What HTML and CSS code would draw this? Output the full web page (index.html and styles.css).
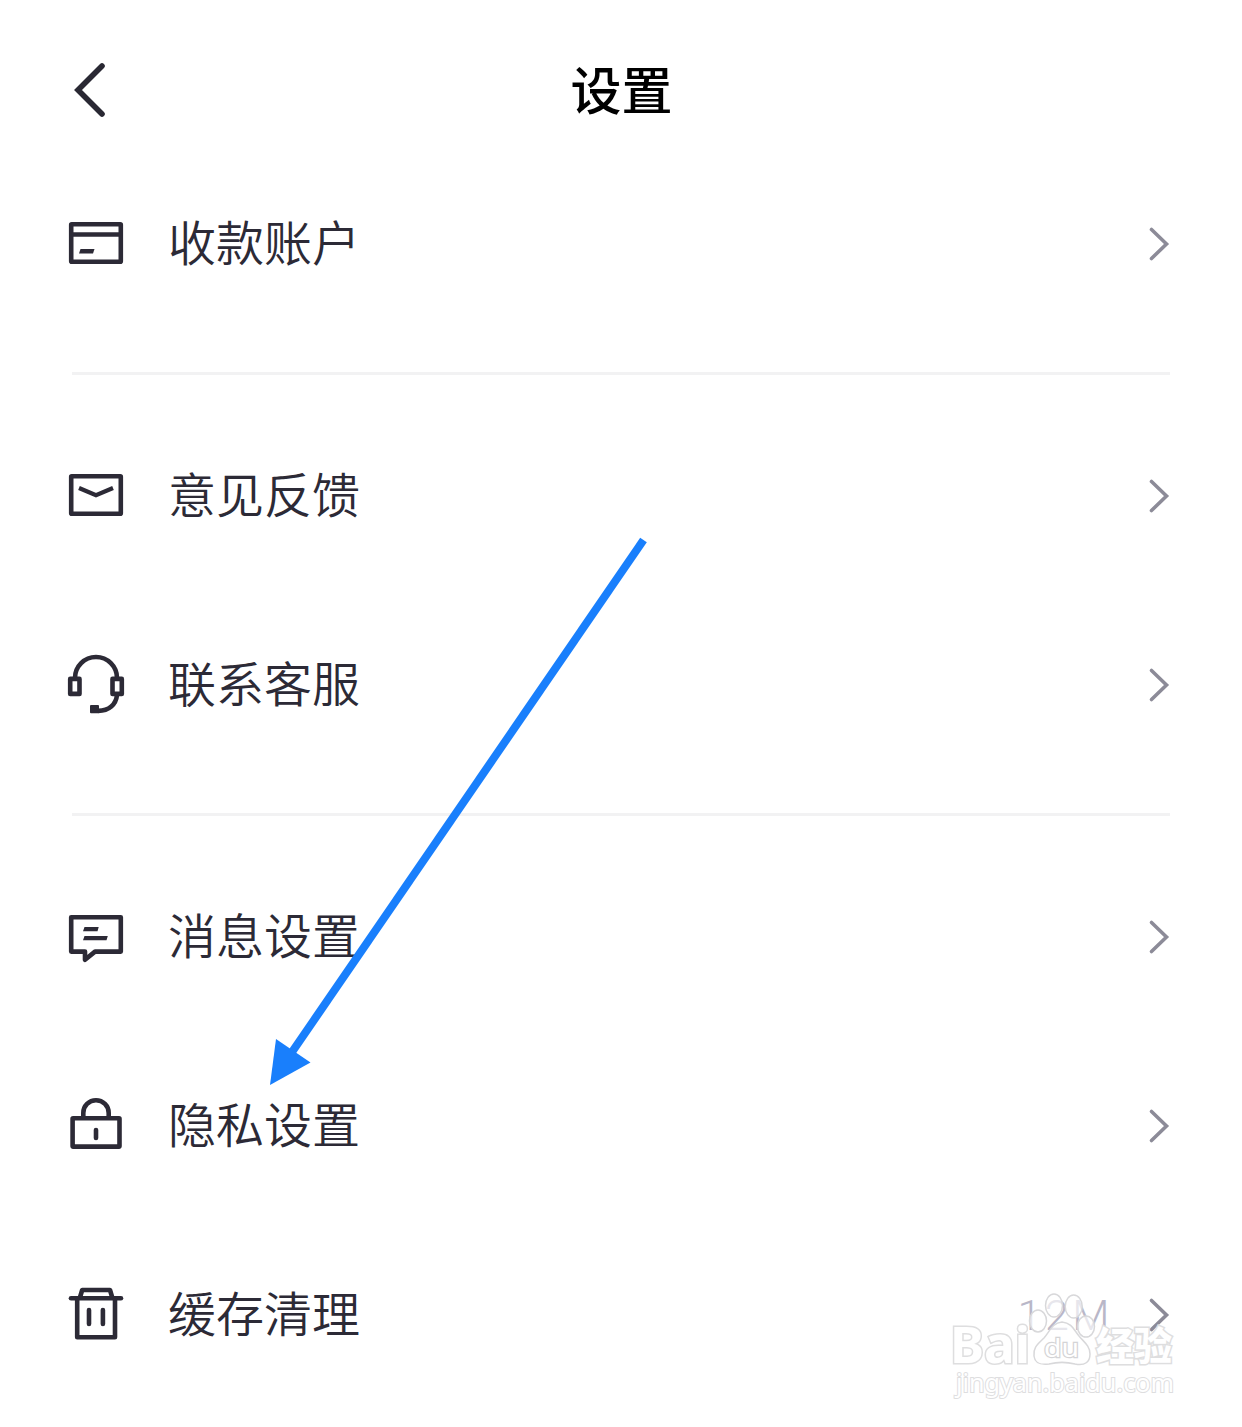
FILE: index.html
```html
<!DOCTYPE html>
<html lang="zh-CN">
<head>
  <meta charset="UTF-8">
  <title>设置</title>
  <link rel="stylesheet" href="styles.css">
</head>
<body>
  <div class="page">
    <header class="header">
      <svg class="back" viewBox="0 0 40 60"><path d="M34 6 L10 30 L34 54"/></svg>
      <h1>设置</h1>
    </header>

    <div class="row">
      <svg class="icon" viewBox="0 0 64 63">
        <rect x="7.2" y="12.2" width="49.6" height="37.6" rx="0.5"/>
        <path d="M7 22.5H57"/>
        <path class="fill" d="M16.5 37H30.5L29 41.5H15Z"/>
      </svg>
      <span class="label">收款账户</span>
      <svg class="chevron" viewBox="0 0 24 40"><path d="M3.5 5.5 L18.5 20 L3.5 34.5"/></svg>
    </div>

    <div class="divider"></div>

    <div class="row">
      <svg class="icon" viewBox="0 0 64 63">
        <rect x="7.2" y="12.2" width="49.6" height="37.6" rx="0.5"/>
        <path class="thin" d="M15 24L32 31.2L49 24"/>
      </svg>
      <span class="label">意见反馈</span>
      <svg class="chevron" viewBox="0 0 24 40"><path d="M3.5 5.5 L18.5 20 L3.5 34.5"/></svg>
    </div>

    <div class="row">
      <svg class="icon" viewBox="0 0 64 63">
        <path d="M11 25A21 21 0 0 1 53 25"/>
        <rect x="6.2" y="25.9" width="9.3" height="15"/>
        <rect x="48.5" y="25.9" width="9.3" height="15"/>
        <path d="M53 42C52 51.5 45 58 34 57.9"/>
        <rect class="fill" x="26" y="52" width="9" height="8.2" rx="1"/>
      </svg>
      <span class="label">联系客服</span>
      <svg class="chevron" viewBox="0 0 24 40"><path d="M3.5 5.5 L18.5 20 L3.5 34.5"/></svg>
    </div>

    <div class="divider"></div>

    <div class="row">
      <svg class="icon" viewBox="0 0 64 63">
        <path d="M7.2 12.2H56.8V46.6H31L21 54.8V46.6H7.2Z"/>
        <path class="fill" d="M20.5 22H34.7L33.5 26.3H19ZM20.5 31H43.8L42.5 35.3H19Z"/>
      </svg>
      <span class="label">消息设置</span>
      <svg class="chevron" viewBox="0 0 24 40"><path d="M3.5 5.5 L18.5 20 L3.5 34.5"/></svg>
    </div>

    <div class="row">
      <svg class="icon" viewBox="0 0 64 63">
        <rect x="8.6" y="24.2" width="46.9" height="28.4" rx="0.5"/>
        <path d="M19.3 23V18.9A12.7 12.7 0 0 1 44.7 18.9V23"/>
        <path class="round" d="M32 36V44"/>
      </svg>
      <span class="label">隐私设置</span>
      <svg class="chevron" viewBox="0 0 24 40"><path d="M3.5 5.5 L18.5 20 L3.5 34.5"/></svg>
    </div>

    <div class="row">
      <svg class="icon" viewBox="0 0 64 63">
        <path class="round" d="M7 15.3H57"/>
        <path d="M13.2 15.3V54.2H51V15.3M15.8 15L18.2 7H46L48.4 15"/>
        <path class="round" d="M25 27V41M38.9 27V41"/>
      </svg>
      <span class="label">缓存清理</span>
      <span class="value">12M</span>
      <svg class="chevron" viewBox="0 0 24 40"><path d="M3.5 5.5 L18.5 20 L3.5 34.5"/></svg>
    </div>

    <!-- 指向“隐私设置”的箭头 -->
    <svg class="arrow" viewBox="0 0 400 560">
      <path d="M383.5 10L30 525"/>
      <polygon points="10,555 16,509 50.5,532.5"/>
    </svg>

    <!-- 水印 -->
    <svg class="watermark" viewBox="0 0 240 120">
      <text class="brand" x="10" y="73" textLength="80" lengthAdjust="spacingAndGlyphs">Bai</text>
      <path d="M122 32C112 33 110 41 104 48C98 54 93 57 94 66C95 74 101 75 109 74C117 72 127 72 135 74C145 76 150 72 150 64C150 56 144 52 139 46C134 40 132 33 122 32Z"/>
      <ellipse cx="98" cy="31" rx="8.5" ry="11"/>
      <ellipse cx="114" cy="15.5" rx="8.5" ry="11.5"/>
      <ellipse cx="133.7" cy="16.5" rx="8.5" ry="11.5"/>
      <ellipse cx="146" cy="36.5" rx="8.5" ry="10.5"/>
      <text class="du" x="104" y="67" textLength="35" lengthAdjust="spacingAndGlyphs">du</text>
      <text class="cn" x="156" y="70" textLength="76" lengthAdjust="spacingAndGlyphs">经验</text>
      <text class="site" x="16" y="102" textLength="218" lengthAdjust="spacingAndGlyphs">jingyan.baidu.com</text>
    </svg>
  </div>
</body>
</html>
```
FILE: styles.css
```css
body {
  margin: 0;
  background: #fff;
  font-family: "Noto Sans CJK SC", sans-serif;
}
.page {
  position: relative;
  height: 1427px;
  box-sizing: border-box;
  padding: 0 70px 0 64px;
  overflow: hidden;
}
.header {
  display: grid;
  grid-template-columns: 44px 1fr 44px;
  align-items: center;
  height: 149px;
  margin-right: -7px;
}
.header h1 {
  margin: 26px 0 0;
  font-size: 51px;
  line-height: 60px;
  font-weight: 500;
  text-align: center;
  color: #000;
}
.back {
  width: 40px;
  height: 60px;
  margin: 31px 0 0 4px;
  fill: none;
  stroke: #292833;
  stroke-width: 5.6;
  stroke-linecap: round;
}
.row {
  display: flex;
  align-items: center;
  height: 189px;
}
.icon {
  width: 64px;
  height: 63px;
  margin-right: 40px;
  fill: none;
  stroke: #2c2a36;
  stroke-width: 4.6;
  stroke-linejoin: round;
}
.icon .fill {
  fill: #2c2a36;
  stroke: none;
}
.icon .thin {
  stroke-width: 4.2;
  stroke-linejoin: miter;
}
.icon .round {
  stroke-linecap: round;
}
.label {
  flex: 1;
  padding-bottom: 8px;
  font-size: 48px;
  line-height: 70px;
  font-weight: 350;
  color: #2c2a36;
}
.value {
  margin-right: 35px;
  font-family: Roboto, sans-serif;
  font-size: 43px;
  font-weight: 300;
  letter-spacing: 3.5px;
  color: #b9b7c8;
}
.chevron {
  width: 24px;
  height: 40px;
  fill: none;
  stroke: #8c8b98;
  stroke-width: 3.6;
  stroke-linecap: round;
}
.divider {
  height: 3px;
  margin: 34px 2px 26px 8px;
  background: #f2f2f3;
}
.arrow {
  position: absolute;
  left: 260px;
  top: 530px;
  width: 400px;
  height: 560px;
  fill: #197ffc;
}
.arrow path {
  stroke: #197ffc;
  stroke-width: 8;
}
.watermark {
  position: absolute;
  left: 940px;
  top: 1290px;
  width: 240px;
  height: 120px;
  fill: rgba(255, 255, 255, 0.65);
  stroke: #d8d8da;
  stroke-width: 1.5;
}
.watermark text {
  paint-order: stroke;
  stroke: #dededf;
  stroke-width: 3;
  fill: #fff;
  font-family: "Noto Sans", sans-serif;
}
.watermark .brand {
  font-size: 50px;
  font-weight: 700;
}
.watermark .du {
  font-size: 26px;
  font-weight: 400;
  stroke: #d4d4d6;
  stroke-width: 2.4;
}
.watermark .cn {
  font-family: "Noto Sans CJK SC", sans-serif;
  font-size: 39px;
  font-weight: 900;
}
.watermark .site {
  font-size: 25px;
  stroke-width: 2;
}
```
